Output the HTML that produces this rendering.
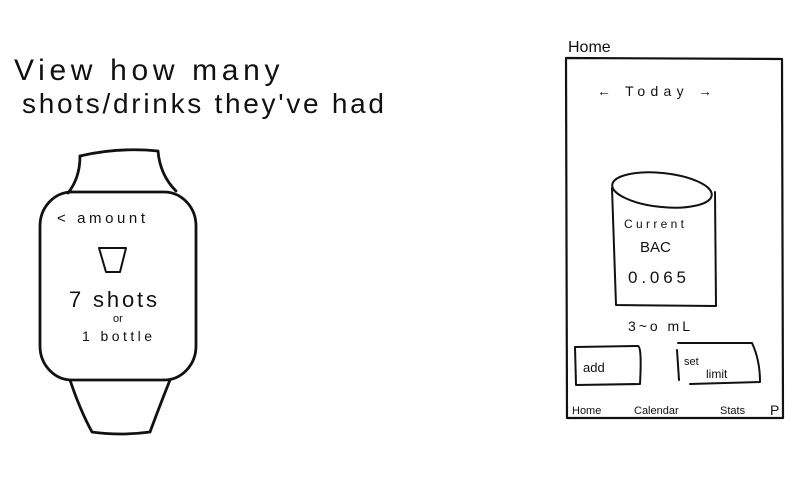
<!DOCTYPE html>
<html><head><style>
html,body{margin:0;padding:0;background:#fff;width:806px;height:492px;overflow:hidden}
svg text{font-family:"Liberation Sans",sans-serif;fill:#111}
</style></head><body>
<svg width="806" height="492" viewBox="0 0 806 492" xmlns="http://www.w3.org/2000/svg">
<g fill="none" stroke="#111" stroke-width="2.8" stroke-linecap="round" stroke-linejoin="round">
<path d="M80 156 Q118 147 158 151 Q160 175 176 191"/>
<path d="M80 156 Q80 178 68 193"/>
<rect x="40" y="192" width="156" height="188" rx="32" ry="34"/>
<path d="M70 380 Q80 410 92 432 Q120 436 150 432 Q160 405 170 380"/>
<path d="M99 248 L126 248 L120 272 L106 272 Z" stroke-width="2"/>
<path d="M566 58 L782 59 L783 418 L567 418 Z" stroke-width="2.2"/>
<ellipse cx="662" cy="190" rx="50" ry="17" transform="rotate(6 662 190)" stroke-width="2"/>
<path d="M612 188 L616 305 L716 306 L715 192" stroke-width="2"/>
<path d="M575 347 L638 346 Q642 347 640 384 L576 385 Z" stroke-width="2"/>
<path d="M678 343 L752 343 Q760 360 760 382 L690 384" stroke-width="2"/>
<path d="M677 350 L679 380" stroke-width="2"/>
</g>
<text x="14" y="80" font-size="30" letter-spacing="4.5" textLength="270" lengthAdjust="spacing">View how many</text>
<text x="22" y="113" font-size="28" textLength="362" lengthAdjust="spacing">shots/drinks they've had</text>
<text x="57" y="223" font-size="15" textLength="88" lengthAdjust="spacing">&lt; amount</text>
<text x="69" y="307" font-size="22" textLength="88" lengthAdjust="spacing">7 shots</text>
<text x="113" y="322" font-size="11">or</text>
<text x="82" y="341" font-size="14" textLength="70" lengthAdjust="spacing">1 bottle</text>
<text x="568" y="52" font-size="16">Home</text>
<text x="597" y="96" font-size="14" textLength="115" lengthAdjust="spacing">← Today →</text>
<text x="624" y="228" font-size="12" textLength="60" lengthAdjust="spacing">Current</text>
<text x="640" y="252" font-size="15">BAC</text>
<text x="628" y="283" font-size="17" textLength="58" lengthAdjust="spacing">0.065</text>
<text x="628" y="331" font-size="14" textLength="62" lengthAdjust="spacing">3~o mL</text>
<text x="583" y="372" font-size="13">add</text>
<text x="684" y="365" font-size="11">set</text>
<text x="706" y="378" font-size="12">limit</text>
<text x="572" y="414" font-size="11">Home</text>
<text x="634" y="414" font-size="11">Calendar</text>
<text x="720" y="414" font-size="11">Stats</text>
<text x="770" y="415" font-size="14">P</text>
</svg>
</body></html>
